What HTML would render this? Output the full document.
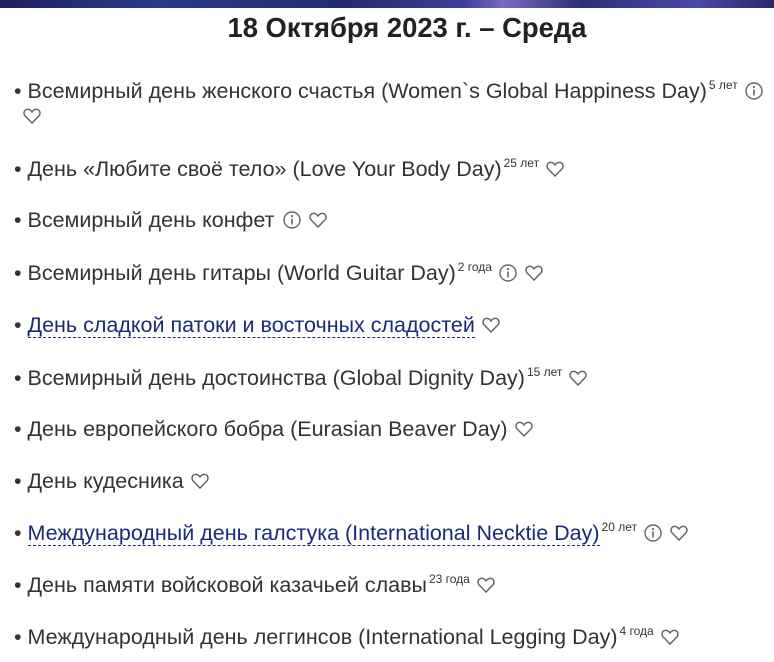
<!DOCTYPE html>
<html><head><meta charset="utf-8"><style>
body{margin:0;width:774px;height:662px;overflow:hidden;background:#fff;font-family:"Liberation Sans",Arial,sans-serif;color:#333;position:relative}
.band{position:absolute;left:0;top:0;width:774px;height:8px;background:linear-gradient(90deg,#1c1f5e,#2a3a8a 20%,#232a6e 45%,#3c3f9a 60%,#7a6ac0 65%,#2b2f78 75%,#4a4aa8 90%,#26296a)}
h1{position:absolute;top:12px;left:20px;width:774px;text-align:center;margin:0;font-size:27.4px;font-weight:bold;color:#222;line-height:32px}
.it{position:absolute;left:14px;font-size:21.5px;line-height:26px;white-space:nowrap}
sup{font-size:12px;vertical-align:top;position:relative;top:-6px;margin-left:2px}
a{color:#1a2a78;text-decoration:none;border-bottom:1px dashed #1a2a78}
svg{vertical-align:-3px;margin-left:6px}
</style></head><body>
<div class="band"></div>
<h1>18 Октября 2023 г. – Среда</h1>
<svg width="0" height="0" style="position:absolute"><defs>
<symbol id="h" viewBox="0 0 20 20"><path d="M10 17 L3.2 10 C1 7.6 2 3.6 5.6 3.4 C7.6 3.3 9 4.6 10 6 C11 4.6 12.4 3.3 14.4 3.4 C18 3.6 19 7.6 16.8 10 Z" fill="none" stroke="#666" stroke-width="1.5"/></symbol>
<symbol id="i" viewBox="0 0 20 20"><circle cx="10" cy="10" r="8" fill="none" stroke="#666" stroke-width="1.4"/><circle cx="10" cy="6" r="1.1" fill="#666"/><rect x="9.2" y="8.5" width="1.6" height="6" fill="#666"/></symbol>
</defs></svg>
<div class="it" style="top:78px">• Всемирный день женского счастья (Women`s Global Happiness Day)<sup>5 лет</sup><svg width="20" height="20"><use href="#i"/></svg></div>
<div class="it" style="top:103px"><svg width="20" height="20" style="margin-left:8px"><use href="#h"/></svg></div>
<div class="it" style="top:156px">• День «Любите своё тело» (Love Your Body Day)<sup>25 лет</sup><svg width="20" height="20"><use href="#h"/></svg></div>
<div class="it" style="top:207px">• Всемирный день конфет<svg width="20" height="20" style="margin-left:8px"><use href="#i"/></svg><svg width="20" height="20"><use href="#h"/></svg></div>
<div class="it" style="top:260px">• Всемирный день гитары (World Guitar Day)<sup>2 года</sup><svg width="20" height="20"><use href="#i"/></svg><svg width="20" height="20"><use href="#h"/></svg></div>
<div class="it" style="top:312px">• <a>День сладкой патоки и восточных сладостей</a><svg width="20" height="20"><use href="#h"/></svg></div>
<div class="it" style="top:365px">• Всемирный день достоинства (Global Dignity Day)<sup>15 лет</sup><svg width="20" height="20"><use href="#h"/></svg></div>
<div class="it" style="top:416px">• День европейского бобра (Eurasian Beaver Day)<svg width="20" height="20"><use href="#h"/></svg></div>
<div class="it" style="top:468px">• День кудесника<svg width="20" height="20"><use href="#h"/></svg></div>
<div class="it" style="top:520px">• <a>Международный день галстука (International Necktie Day)</a><sup>20 лет</sup><svg width="20" height="20"><use href="#i"/></svg><svg width="20" height="20"><use href="#h"/></svg></div>
<div class="it" style="top:572px">• День памяти войсковой казачьей славы<sup>23 года</sup><svg width="20" height="20"><use href="#h"/></svg></div>
<div class="it" style="top:624px">• Международный день леггинсов (International Legging Day)<sup>4 года</sup><svg width="20" height="20"><use href="#h"/></svg></div>
</body></html>
